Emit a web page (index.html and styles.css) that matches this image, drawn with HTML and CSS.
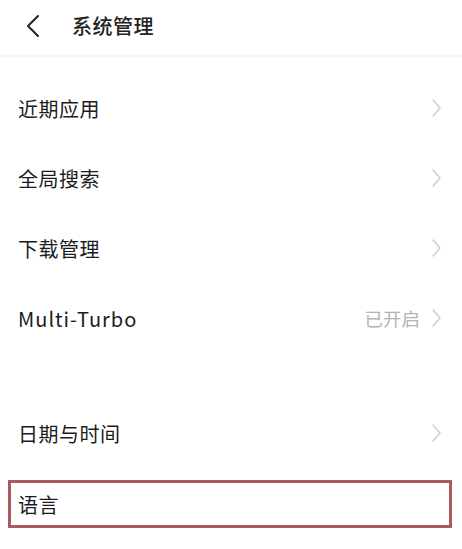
FILE: index.html
```html
<!DOCTYPE html>
<html lang="zh-CN">
<head>
<meta charset="utf-8">
<title>系统管理</title>
<link rel="stylesheet" href="styles.css">
</head>
<body>
<div class="page">
  <header class="header">
    <svg class="back" width="16" height="24" viewBox="0 0 16 24"><path d="M13 2 L3 12 L13 22" fill="none" stroke="#222" stroke-width="2" stroke-linecap="round" stroke-linejoin="round"/></svg>
    <h1 class="title">系统管理</h1>
  </header>
  <div class="list">
    <div class="row"><span class="label">近期应用</span><svg class="chev" width="11" height="20" viewBox="0 0 11 20"><path d="M2 2 L9 10 L2 18" fill="none" stroke="#cfcfcf" stroke-width="1.6" stroke-linecap="round" stroke-linejoin="round"/></svg></div>
    <div class="row"><span class="label">全局搜索</span><svg class="chev" width="11" height="20" viewBox="0 0 11 20"><path d="M2 2 L9 10 L2 18" fill="none" stroke="#cfcfcf" stroke-width="1.6" stroke-linecap="round" stroke-linejoin="round"/></svg></div>
    <div class="row"><span class="label">下载管理</span><svg class="chev" width="11" height="20" viewBox="0 0 11 20"><path d="M2 2 L9 10 L2 18" fill="none" stroke="#cfcfcf" stroke-width="1.6" stroke-linecap="round" stroke-linejoin="round"/></svg></div>
    <div class="row"><span class="label latin">Multi-Turbo</span><span class="value">已开启</span><svg class="chev" width="11" height="20" viewBox="0 0 11 20"><path d="M2 2 L9 10 L2 18" fill="none" stroke="#cfcfcf" stroke-width="1.6" stroke-linecap="round" stroke-linejoin="round"/></svg></div>
  </div>
  <div class="list group2">
    <div class="row"><span class="label">日期与时间</span><svg class="chev" width="11" height="20" viewBox="0 0 11 20"><path d="M2 2 L9 10 L2 18" fill="none" stroke="#cfcfcf" stroke-width="1.6" stroke-linecap="round" stroke-linejoin="round"/></svg></div>
    <div class="row highlight"><span class="label">语言</span></div>
  </div>
</div>
</body>
</html>
```

FILE: styles.css
```css
* { box-sizing: border-box; }
html, body { margin: 0; padding: 0; background: #fff; }
body {
  font-family: "Noto Sans CJK SC", "Noto Sans", sans-serif;
  color: #1c1c1c;
  width: 462px;
  height: 549px;
  overflow: hidden;
}
.header {
  height: 57px;
  display: flex;
  align-items: center;
  padding-left: 25px;
  padding-bottom: 4px;
  border-bottom: 2px solid #f8f8f8;
}
.back { flex: none; }
.title {
  margin: 0 0 0 31px;
  font-size: 20px;
  font-weight: 500;
  color: #222;
  letter-spacing: 0.5px;
}
.list { padding-top: 16px; }
.group2 { padding-top: 45px; }
.row {
  height: 70px;
  display: flex;
  align-items: center;
  padding: 0 20px 0 18px;
}
.label {
  font-size: 20px;
  letter-spacing: 0.5px;
  flex: 1;
}
.latin { letter-spacing: 1px; }
.value {
  font-size: 18.5px;
  color: #b4b4b4;
  margin-right: 11px;
}
.chev { flex: none; }
.highlight {
  height: 48px;
  margin: 12px 10px 0 8px;
  border: 3px solid #a95b5f;
  padding-left: 7px;
}
```
